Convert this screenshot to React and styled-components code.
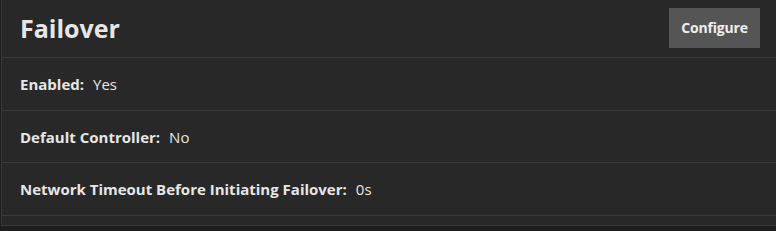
import React from "react"
import styled, { createGlobalStyle } from "styled-components"

const GlobalStyle = createGlobalStyle`
  html, body {
    margin: 0;
    padding: 0;
    background: #1e1e1e;
    font-family: "Open Sans", "Noto Sans", sans-serif;
  }
`

const Card = styled.section`
  background: #282828;
  border-left: 1px solid #383838;
  border-bottom: 1px solid #383838;
  margin-left: 1px;
  padding-bottom: 9px;
  box-sizing: border-box;
`

const Header = styled.header`
  display: flex;
  align-items: center;
  justify-content: space-between;
  height: 58px;
  padding: 0 16px 2px 18px;
  border-bottom: 1px solid #3a3a3a;
  box-sizing: border-box;
`

const Title = styled.h2`
  margin: 0;
  font-size: 25px;
  font-weight: 700;
  color: #e6e6e6;
`

const Button = styled.button`
  width: 91px;
  height: 40px;
  padding: 0;
  background: #555555;
  border: 0;
  border-radius: 0;
  color: #eeeeee;
  font-family: inherit;
  font-size: 14px;
  font-weight: 700;
  letter-spacing: -0.2px;
  cursor: pointer;
`

const Row = styled.div`
  display: flex;
  align-items: center;
  height: ${p => p.$h}px;
  padding: 0 18px;
  border-bottom: 1px solid #3a3a3a;
  box-sizing: border-box;
  font-size: 15px;
  color: #e6e6e6;
`

const Label = styled.span`
  font-weight: 700;
  margin-right: 9px;
`

const Value = styled.span`
  font-weight: 400;
`

const items = [
  ["Enabled:", "Yes", 53],
  ["Default Controller:", "No", 52],
  ["Network Timeout Before Initiating Failover:", "0s", 53],
]

const App = () => (
  <>
    <GlobalStyle />
    <Card>
      <Header>
        <Title>Failover</Title>
        <Button>Configure</Button>
      </Header>
      {items.map(([label, value, h]) => (
        <Row key={label} $h={h}>
          <Label>{label}</Label>
          <Value>{value}</Value>
        </Row>
      ))}
    </Card>
  </>
)

export default App
